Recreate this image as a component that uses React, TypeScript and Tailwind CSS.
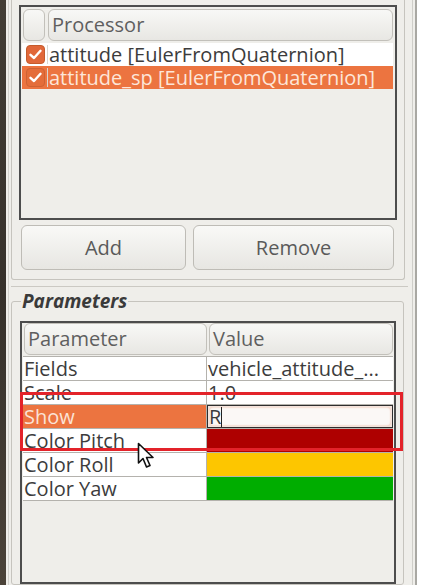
import React from "react";

const ORANGE = "bg-[#ec7440]";

function HeaderCell({ children, className = "" }: { children?: React.ReactNode; className?: string }) {
  return (
    <div
      className={`flex items-center rounded-[6px] border border-[#c2c0ba] bg-gradient-to-b from-[#f8f8f6] to-[#e8e7e3] pl-[3px] text-[20px] leading-[24px] text-[#5f5f5f] ${className}`}
    >
      {children}
    </div>
  );
}

function Check({ selected }: { selected?: boolean }) {
  return (
    <div
      className={`flex h-[19px] w-[19px] items-center justify-center rounded-[4px] border ${
        selected ? "border-[#cf6233] bg-[#e46d3a]" : "border-[#c55b2c] bg-[#e1683a]"
      }`}
    >
      <svg width="13" height="11" viewBox="0 0 13 11">
        <path d="M1.5 5.8 L5 9 L11.5 1.8" fill="none" stroke="#ffffff" strokeWidth="2.4" strokeLinecap="round" strokeLinejoin="round" />
      </svg>
    </div>
  );
}

function ProcessorRow({ label, selected }: { label: string; selected?: boolean }) {
  return (
    <div className={`flex h-[23px] items-center ${selected ? ORANGE : "bg-white"}`}>
      <div className="flex w-[26px] shrink-0 items-center justify-center border-r border-[#d8d6d0] pl-[1px]">
        <Check selected={selected} />
      </div>
      <span className={`pl-[1px] text-[20px] leading-[23px] ${selected ? "text-[#fde6d9]" : "text-[#3c3c3c]"}`}>{label}</span>
    </div>
  );
}

function ParamRow({ name, children, selected }: { name: string; children?: React.ReactNode; selected?: boolean }) {
  return (
    <div className="flex h-[24px] border-b border-[#b4b2ad]">
      <div
        className={`flex w-[184px] shrink-0 items-center border-r border-[#b4b2ad] pl-[1px] text-[20px] leading-[23px] ${
          selected ? `${ORANGE} text-[#fbe2d5]` : "bg-white text-[#3c3c3c]"
        }`}
      >
        {name}
      </div>
      <div className="flex flex-1 items-stretch overflow-hidden bg-white">{children}</div>
    </div>
  );
}

function Swatch({ color }: { color: string }) {
  return <div className={`flex-1 ${color}`} />;
}

export default function App() {
  return (
    <div className="flex h-[585px] w-[431px] overflow-hidden bg-[#efeeea] font-['Open_Sans',sans-serif]">
      {/* desktop edge */}
      <div className="w-[6px] shrink-0 bg-gradient-to-b from-[#433d35] via-[#36312b] to-[#4b4339]" />
      <div className="w-[2px] shrink-0" />
      <div className="w-px shrink-0 bg-[#d2d1cc]" />
      <div className="w-[2px] shrink-0" />

      <div className="flex w-[397px] shrink-0 flex-col">
        {/* Processor group */}
        <div className="flex h-[280px] w-[394px] flex-col rounded-b-[3px] border-x border-b border-[#c6c4be] px-[7px] pt-[5px]">
          <div className="flex h-[215px] flex-col border-2 border-[#4d4d4d] pt-[2px] pl-[1px] pr-[2px]">
            <div className="flex h-[32px] gap-[3px] pl-[1px]">
              <HeaderCell className="w-[22px]" />
              <HeaderCell className="flex-1">Processor</HeaderCell>
            </div>
            <div className="mt-[2px] flex flex-col">
              <ProcessorRow label="attitude [EulerFromQuaternion]" />
              <ProcessorRow label="attitude_sp [EulerFromQuaternion]" selected />
            </div>
          </div>
          <div className="mt-[5px] flex h-[45px] gap-[7px] pl-[2px] pr-[3px]">
            <button className="w-[165px] rounded-[6px] border border-[#bebcb6] bg-gradient-to-b from-[#f9f9f7] to-[#e7e6e2] text-[20px] text-[#5a5a5a]">
              Add
            </button>
            <button className="flex-1 rounded-[6px] border border-[#bebcb6] bg-gradient-to-b from-[#f9f9f7] to-[#e7e6e2] text-[20px] text-[#5a5a5a]">
              Remove
            </button>
          </div>
        </div>

        <div className="mt-[6px] h-px w-[397px] bg-[#cbc9c3]" />

        {/* Parameters group */}
        <fieldset className="mt-[3px] flex min-h-0 w-[393px] flex-1 flex-col rounded-[3px] border border-[#c6c4be] pl-[8px] pr-[7px]">
          <legend className="ml-[1px] px-[1px] text-[19px] leading-[22px] font-bold italic text-[#3a3a3a]">Parameters</legend>
          <div className="mt-[9px] flex flex-1 flex-col border-2 border-[#4d4d4d] pl-[1px] pr-[1px]">
            <div className="flex h-[32px] gap-[2px] pl-[1px]">
              <HeaderCell className="w-[183px]">Parameter</HeaderCell>
              <HeaderCell className="flex-1">Value</HeaderCell>
            </div>
            <div className="mt-[1px] flex flex-col border-t border-[#b4b2ad]">
              <ParamRow name="Fields">
                <span className="pl-[1px] text-[20px] leading-[23px] text-[#3c3c3c]">vehicle_attitude_...</span>
              </ParamRow>
              <ParamRow name="Scale">
                <span className="pl-[1px] text-[20px] leading-[23px] text-[#3c3c3c]">1.0</span>
              </ParamRow>
              <ParamRow name="Show" selected>
                <div className="flex flex-1 border border-[#2e2e2e] bg-[#f3e3dc] p-px">
                  <div className="flex flex-1 items-center rounded-[4px] bg-[#fbf8f6] shadow-[inset_0_0_2px_#e7a589]">
                    <span className="text-[20px] leading-none text-[#3c3c3c]">R</span>
                    <span className="h-[20px] w-px bg-[#222]" />
                  </div>
                </div>
              </ParamRow>
              <ParamRow name="Color Pitch">
                <Swatch color="bg-[#ae0000]" />
              </ParamRow>
              <ParamRow name="Color Roll">
                <Swatch color="bg-[#fdc600]" />
              </ParamRow>
              <ParamRow name="Color Yaw">
                <Swatch color="bg-[#00ad00]" />
              </ParamRow>
            </div>
          </div>
        </fieldset>
      </div>

      {/* dock frame on the right */}
      <div className="w-[4px] shrink-0" />
      <div className="w-px shrink-0 bg-[#cfcec9]" />
      <div className="w-[2px] shrink-0" />
      <div className="w-[2px] shrink-0 bg-[#a9a8a3]" />
      <div className="flex-1 bg-white" />

      {/* highlight box drawn over the screenshot */}
      <div className="pointer-events-none absolute left-[20px] top-[392px] h-[59px] w-[383px] border-[3px] border-[#e3232a]" />

      {/* mouse pointer */}
      <svg className="pointer-events-none absolute left-[137px] top-[442px]" width="22" height="28" viewBox="0 0 22 28">
        <path d="M1.5 1.5 L1.5 21 L6 16.5 L9.5 25 L13 23.5 L9.5 15.5 L16 15.5 Z" fill="#ffffff" stroke="#111111" strokeWidth="1.6" strokeLinejoin="round" />
      </svg>
    </div>
  );
}
